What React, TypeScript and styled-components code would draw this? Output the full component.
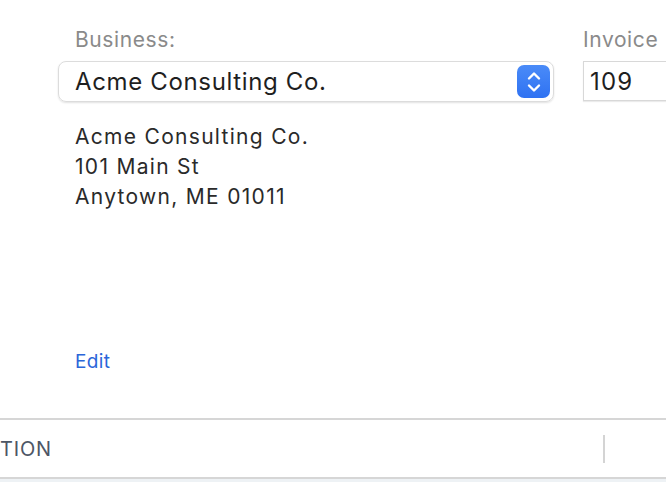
import React from "react";
import styled, { createGlobalStyle } from "styled-components";

const GlobalStyle = createGlobalStyle`
  html, body {
    margin: 0;
    padding: 0;
    background: #ffffff;
    overflow: hidden;
  }
  body {
    font-family: Inter, "Noto Sans", "Liberation Sans", sans-serif;
    color: #222222;
  }
`;

const Page = styled.div`
  width: 666px;
  height: 482px;
  display: flex;
  flex-direction: column;
  background: #eef2f5;
`;

const Top = styled.div`
  height: 420px;
  display: flex;
  gap: 29px;
  padding-left: 58px;
  background: #ffffff;
  border-bottom: 2px solid #d6d6d6;
  box-sizing: border-box;
`;

const Column = styled.div<{ $width?: number }>`
  display: flex;
  flex-direction: column;
  width: ${({ $width }) => ($width ? `${$width}px` : "auto")};
  flex: ${({ $width }) => ($width ? "none" : "1")};
`;

const Label = styled.div<{ $indent?: number }>`
  font-size: 21px;
  letter-spacing: 0.6px;
  color: #8a8a8a;
  padding-top: 28px;
  padding-left: ${({ $indent }) => $indent ?? 0}px;
  line-height: 24px;
  height: 33px;
  white-space: nowrap;
`;

const Select = styled.div`
  height: 41px;
  box-sizing: border-box;
  border: 1px solid #dcdcdc;
  border-radius: 8px;
  box-shadow: 0 1px 2px rgba(0, 0, 0, 0.12);
  display: flex;
  align-items: center;
  justify-content: space-between;
  padding: 0 3px 0 16px;
  font-size: 24px;
  letter-spacing: 0.65px;
  color: #1f1f1f;
`;

const Stepper = styled.div`
  width: 33px;
  height: 33px;
  border-radius: 7px;
  background: linear-gradient(#4a8bf8, #2f72f2);
  display: flex;
  align-items: center;
  justify-content: center;
`;

const Input = styled.div`
  height: 40px;
  box-sizing: border-box;
  border: 1px solid #d8d8d8;
  border-right: none;
  box-shadow: 0 1px 1px rgba(0, 0, 0, 0.08);
  display: flex;
  align-items: center;
  padding-left: 6px;
  font-size: 24px;
  letter-spacing: 1.2px;
  color: #1f1f1f;
`;

const Address = styled.div`
  padding: 20px 0 0 17px;
  font-size: 21px;
  letter-spacing: 1.3px;
  line-height: 30px;
  color: #2a2a2a;
`;

const EditLink = styled.a`
  margin-top: 138px;
  margin-left: 17px;
  font-size: 19px;
  letter-spacing: 0.4px;
  color: #2a66d9;
  text-decoration: none;
  cursor: pointer;
  line-height: 24px;
  align-self: flex-start;
`;

const TableHeader = styled.div`
  height: 59px;
  display: flex;
  align-items: center;
  background: #ffffff;
  border-bottom: 2px solid #d6d6d6;
  box-sizing: border-box;
`;

const HeaderCell = styled.div<{ $width: number }>`
  width: ${({ $width }) => $width}px;
  height: 28px;
  display: flex;
  align-items: center;
  font-size: 20px;
  letter-spacing: 0.8px;
  color: #4d5665;
  box-sizing: border-box;
`;

const Divider = styled.div`
  width: 2px;
  height: 28px;
  background: #d4d4d4;
`;

export default function App() {
  return (
    <>
      <GlobalStyle />
      <Page>
        <Top>
          <Column $width={496}>
            <Label $indent={17}>Business:</Label>
            <Select>
              <span>Acme Consulting Co.</span>
              <Stepper>
                <svg width="16" height="26" viewBox="0 0 16 26" fill="none">
                  <path d="M3 9.5 L8 4.5 L13 9.5" stroke="#ffffff" strokeWidth="2.4" strokeLinecap="round" strokeLinejoin="round" />
                  <path d="M3 16.5 L8 21.5 L13 16.5" stroke="#ffffff" strokeWidth="2.4" strokeLinecap="round" strokeLinejoin="round" />
                </svg>
              </Stepper>
            </Select>
            <Address>
              Acme Consulting Co.
              <br />
              101 Main St
              <br />
              Anytown, ME 01011
            </Address>
            <EditLink>Edit</EditLink>
          </Column>
          <Column>
            <Label>Invoice</Label>
            <Input>109</Input>
          </Column>
        </Top>
        <TableHeader>
          <HeaderCell $width={603}>TION</HeaderCell>
          <Divider />
        </TableHeader>
      </Page>
    </>
  );
}
